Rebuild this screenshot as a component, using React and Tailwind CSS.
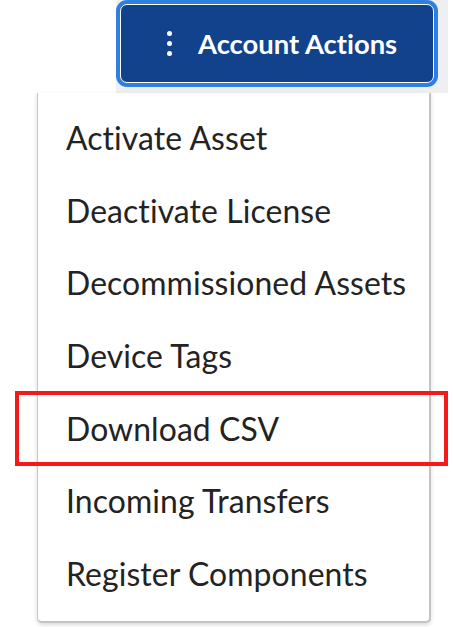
import React from 'react';

const items = [
  'Activate Asset',
  'Deactivate License',
  'Decommissioned Assets',
  'Device Tags',
  'Download CSV',
  'Incoming Transfers',
  'Register Components',
];

const App = () => {
  return (
    <div className="relative w-[453px] h-[627px] bg-white overflow-hidden [font-variant-ligatures:none]" style={{ fontFamily: 'Lato, "Open Sans", sans-serif' }}>
      {/* toolbar strip with the button */}
      <div className="ml-[116px] w-[332px] h-[93px] bg-[#eeeff1]">
        <button className="flex w-[322px] h-[87px] rounded-[11px] bg-[#2f7fe3] p-[4px]">
          <span className="flex flex-1 items-center rounded-[7px] border border-white bg-[#13428c] pl-[46px]">
            <span className="flex flex-col gap-[5px] mr-[26px]">
              <span className="block w-[5px] h-[5px] rounded-full bg-white" />
              <span className="block w-[5px] h-[5px] rounded-full bg-white" />
              <span className="block w-[5px] h-[5px] rounded-full bg-white" />
            </span>
            <span className="text-white font-bold text-[27.4px] leading-none">Account Actions</span>
          </span>
        </button>
      </div>

      {/* dropdown menu */}
      <div className="ml-[37px] w-[394px] h-[530px] bg-white border-l border-[#c8c8c8] border-r-2 border-r-[#c4c4c4] border-b-2 border-b-[#c4c4c4] rounded-b-[5px] pt-[9px] shadow-[0_2px_4px_rgba(0,0,0,0.15)]">
        {items.map((label) => (
          <div key={label} className="flex items-center h-[72.67px] pl-[28px] text-[31.9px] tracking-[0.1px] leading-[72.67px] text-[#232323]">
            {label}
          </div>
        ))}
      </div>

      {/* highlight annotation */}
      <div className="absolute left-[15px] top-[391px] w-[433px] h-[75px] border-4 border-[#f41a1a]" />
    </div>
  );
};

export default App;
